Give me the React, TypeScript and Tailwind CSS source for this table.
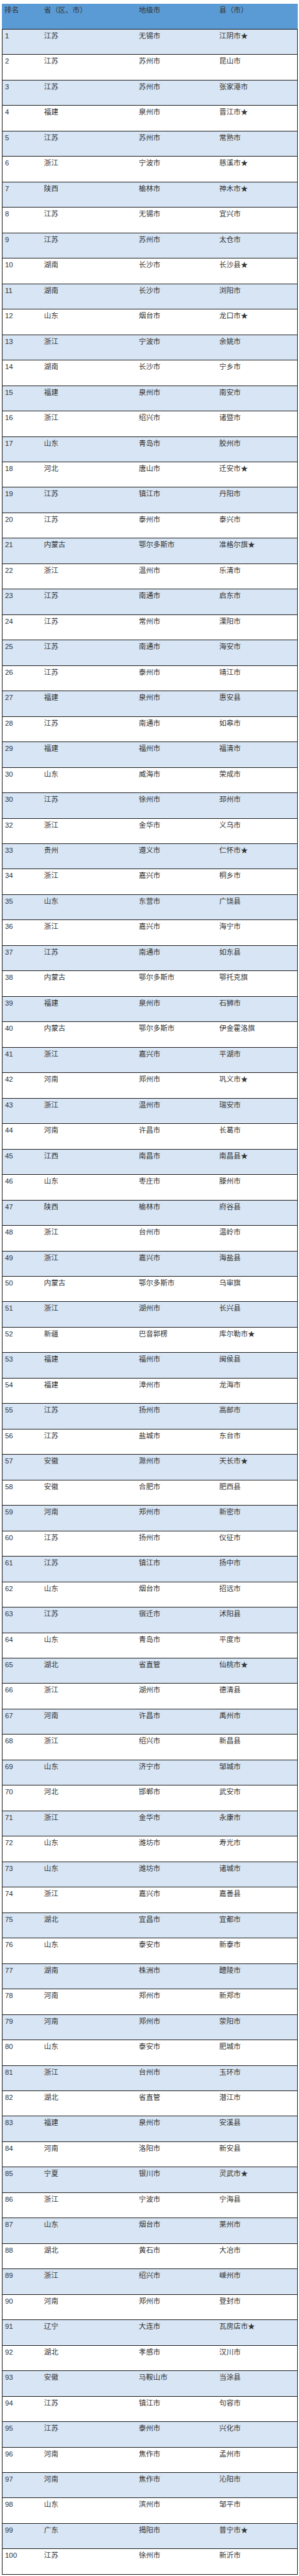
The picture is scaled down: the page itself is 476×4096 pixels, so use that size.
const raw = `1|江苏|无锡市|江阴市★
2|江苏|苏州市|昆山市
3|江苏|苏州市|张家港市
4|福建|泉州市|晋江市★
5|江苏|苏州市|常熟市
6|浙江|宁波市|慈溪市★
7|陕西|榆林市|神木市★
8|江苏|无锡市|宜兴市
9|江苏|苏州市|太仓市
10|湖南|长沙市|长沙县★
11|湖南|长沙市|浏阳市
12|山东|烟台市|龙口市★
13|浙江|宁波市|余姚市
14|湖南|长沙市|宁乡市
15|福建|泉州市|南安市
16|浙江|绍兴市|诸暨市
17|山东|青岛市|胶州市
18|河北|唐山市|迁安市★
19|江苏|镇江市|丹阳市
20|江苏|泰州市|泰兴市
21|内蒙古|鄂尔多斯市|准格尔旗★
22|浙江|温州市|乐清市
23|江苏|南通市|启东市
24|江苏|常州市|溧阳市
25|江苏|南通市|海安市
26|江苏|泰州市|靖江市
27|福建|泉州市|惠安县
28|江苏|南通市|如皋市
29|福建|福州市|福清市
30|山东|威海市|荣成市
30|江苏|徐州市|邳州市
32|浙江|金华市|义乌市
33|贵州|遵义市|仁怀市★
34|浙江|嘉兴市|桐乡市
35|山东|东营市|广饶县
36|浙江|嘉兴市|海宁市
37|江苏|南通市|如东县
38|内蒙古|鄂尔多斯市|鄂托克旗
39|福建|泉州市|石狮市
40|内蒙古|鄂尔多斯市|伊金霍洛旗
41|浙江|嘉兴市|平湖市
42|河南|郑州市|巩义市★
43|浙江|温州市|瑞安市
44|河南|许昌市|长葛市
45|江西|南昌市|南昌县★
46|山东|枣庄市|滕州市
47|陕西|榆林市|府谷县
48|浙江|台州市|温岭市
49|浙江|嘉兴市|海盐县
50|内蒙古|鄂尔多斯市|乌审旗
51|浙江|湖州市|长兴县
52|新疆|巴音郭楞|库尔勒市★
53|福建|福州市|闽侯县
54|福建|漳州市|龙海市
55|江苏|扬州市|高邮市
56|江苏|盐城市|东台市
57|安徽|滁州市|天长市★
58|安徽|合肥市|肥西县
59|河南|郑州市|新密市
60|江苏|扬州市|仪征市
61|江苏|镇江市|扬中市
62|山东|烟台市|招远市
63|江苏|宿迁市|沭阳县
64|山东|青岛市|平度市
65|湖北|省直管|仙桃市★
66|浙江|湖州市|德清县
67|河南|许昌市|禹州市
68|浙江|绍兴市|新昌县
69|山东|济宁市|邹城市
70|河北|邯郸市|武安市
71|浙江|金华市|永康市
72|山东|潍坊市|寿光市
73|山东|潍坊市|诸城市
74|浙江|嘉兴市|嘉善县
75|湖北|宜昌市|宜都市
76|山东|泰安市|新泰市
77|湖南|株洲市|醴陵市
78|河南|郑州市|新郑市
79|河南|郑州市|荥阳市
80|山东|泰安市|肥城市
81|浙江|台州市|玉环市
82|湖北|省直管|潜江市
83|福建|泉州市|安溪县
84|河南|洛阳市|新安县
85|宁夏|银川市|灵武市★
86|浙江|宁波市|宁海县
87|山东|烟台市|莱州市
88|湖北|黄石市|大冶市
89|浙江|绍兴市|嵊州市
90|河南|郑州市|登封市
91|辽宁|大连市|瓦房店市★
92|湖北|孝感市|汉川市
93|安徽|马鞍山市|当涂县
94|江苏|镇江市|句容市
95|江苏|泰州市|兴化市
96|河南|焦作市|孟州市
97|河南|焦作市|沁阳市
98|山东|滨州市|邹平市
99|广东|揭阳市|普宁市★
100|江苏|徐州市|新沂市`;

const rows = raw.split("\n").map((l) => l.split("|"));

export default function App() {
  return (
    <div
      className="bg-white pt-[6px] pb-[3px] text-[#333333] text-[11.4px] leading-[14px]"
      style={{ fontFamily: '"Liberation Sans", "Noto Sans CJK SC", sans-serif' }}
    >
      <div className="ml-[3px] mr-[2px]">
        <div className="grid grid-cols-[63px_151px_128px_1fr] h-[40px] bg-[#5b9bd5]">
          <div className="pl-[4px] pt-[3px]">排名</div>
          <div className="pl-[4px] pt-[3px]">省（区、市）</div>
          <div className="pl-[4px] pt-[3px]">地级市</div>
          <div className="pl-[4px] pt-[3px]">县（市）</div>
        </div>
        <div className="border-x border-b border-[#1a1a1a]">
          {rows.map((r, i) => (
            <div
              key={i}
              className={`grid grid-cols-[62px_151px_128px_1fr] h-[40.47px] border-t border-[#1a1a1a] ${
                i % 2 === 0 ? "bg-[#d7e5f4]" : "bg-white"
              }`}
            >
              <div className="pl-[4px] pt-[3px]">{r[0]}</div>
              <div className="pl-[4px] pt-[3px]">{r[1]}</div>
              <div className="pl-[4px] pt-[3px]">{r[2]}</div>
              <div className="pl-[4px] pt-[3px]">{r[3]}</div>
            </div>
          ))}
        </div>
      </div>
    </div>
  );
}
